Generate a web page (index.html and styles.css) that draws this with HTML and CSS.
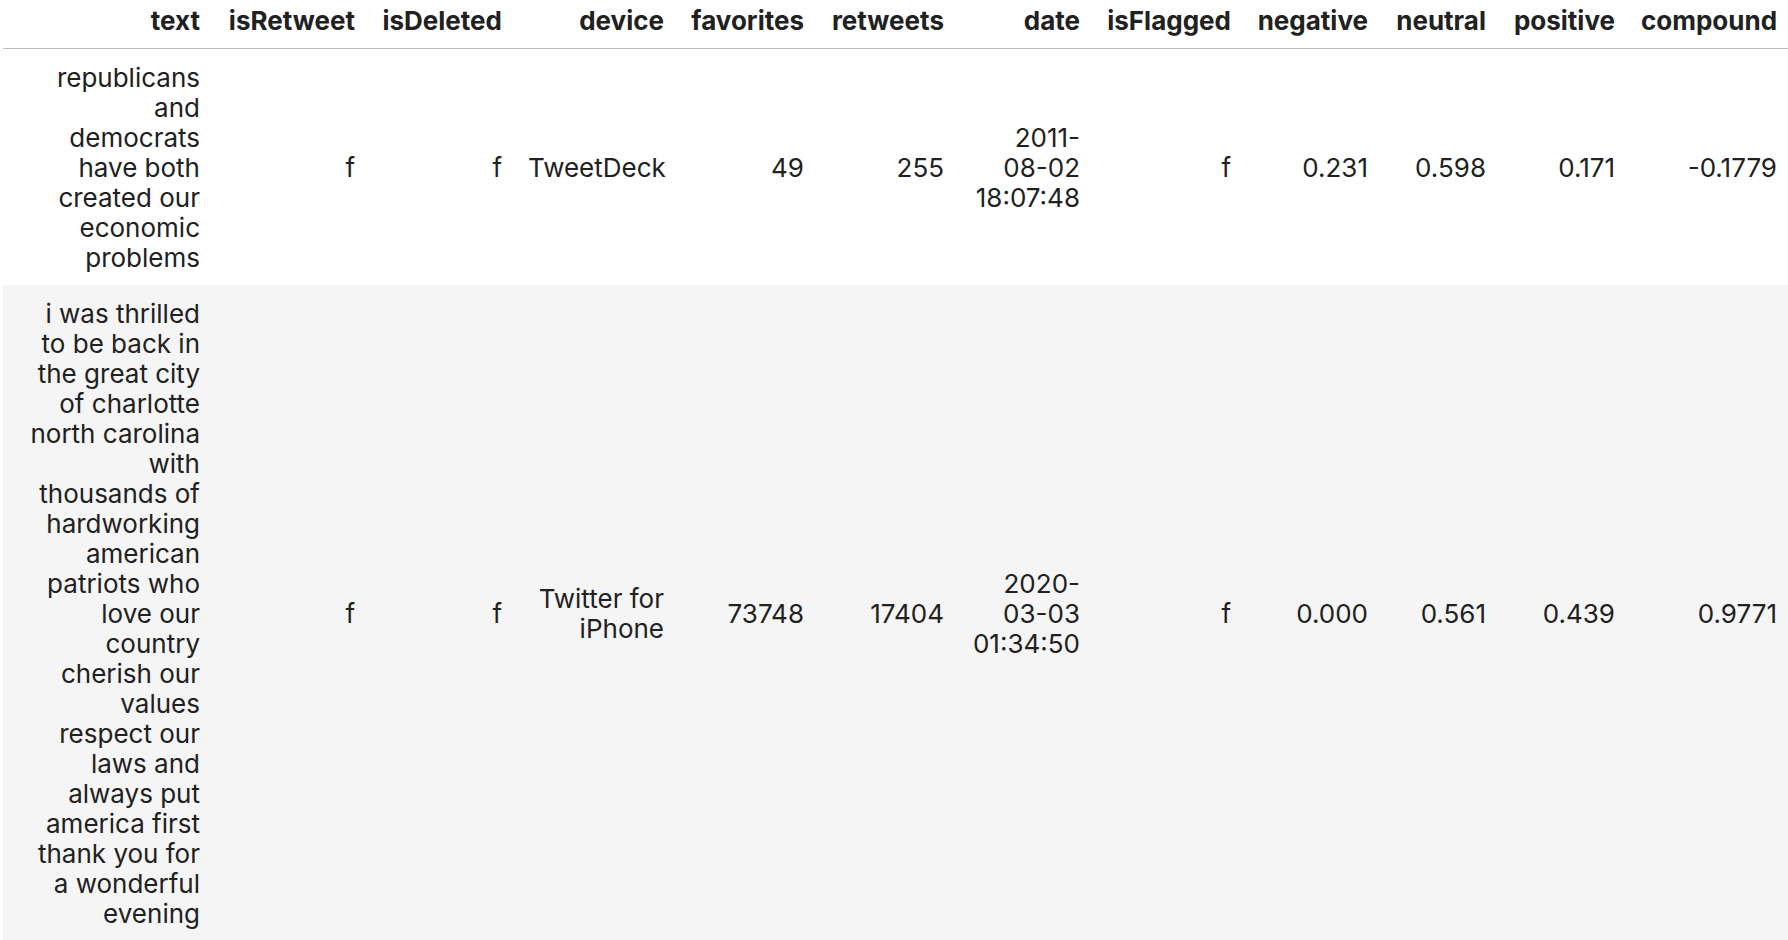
FILE: index.html
```html
<!DOCTYPE html>
<html lang="en">
<head>
<meta charset="utf-8">
<title>DataFrame</title>
<link rel="stylesheet" href="styles.css">
</head>
<body>
<div class="output">
<table class="dataframe">
<colgroup>
<col class="c-text"><col class="c-rt"><col class="c-del"><col class="c-dev"><col class="c-fav"><col class="c-ret"><col class="c-date"><col class="c-flag"><col class="c-neg"><col class="c-neu"><col class="c-pos"><col class="c-comp">
</colgroup>
<thead>
<tr>
<th class="first">text</th><th>isRetweet</th><th>isDeleted</th><th>device</th><th>favorites</th><th>retweets</th><th>date</th><th>isFlagged</th><th>negative</th><th>neutral</th><th>positive</th><th>compound</th>
</tr>
</thead>
<tbody>
<tr>
<td class="first">republicans and democrats have both created our economic problems</td>
<td>f</td><td>f</td><td>TweetDeck</td><td>49</td><td>255</td><td class="date">2011-<wbr><span class="nw">08-02</span> <span class="nw">18:07:48</span></td><td>f</td><td>0.231</td><td>0.598</td><td>0.171</td><td>-0.1779</td>
</tr>
<tr>
<td class="first">i was thrilled to be back in the great city of charlotte north carolina with thousands of hardworking american patriots who love our country cherish our values respect our laws and always put america first thank you for a wonderful evening</td>
<td>f</td><td>f</td><td>Twitter for iPhone</td><td>73748</td><td>17404</td><td class="date">2020-<wbr><span class="nw">03-03</span> <span class="nw">01:34:50</span></td><td>f</td><td>0.000</td><td>0.561</td><td>0.439</td><td>0.9771</td>
</tr>
</tbody>
</table>
</div>
</body>
</html>
```
FILE: styles.css
```css
html, body {
  margin: 0;
  padding: 0;
  overflow: hidden;
  background: #ffffff;
}
.output {
  padding-left: 3px;
}
.dataframe {
  margin-top: -7px;
  border-collapse: collapse;
  border-spacing: 0;
  table-layout: fixed;
  width: 1787px;
  font-family: Inter, "Noto Sans", sans-serif;
  font-size: 26px;
  line-height: 30px;
  color: #212121;
}
.c-text { width: 210px; }
.c-rt { width: 155px; }
.c-del { width: 147px; }
.c-dev { width: 162px; }
.c-fav { width: 140px; }
.c-ret { width: 140px; }
.c-date { width: 136px; }
.c-flag { width: 151px; }
.c-neg { width: 137px; }
.c-neu { width: 118px; }
.c-pos { width: 129px; }
.c-comp { width: 162px; }
.dataframe th,
.dataframe td {
  padding: 14px 13px 12px;
  text-align: right;
  vertical-align: middle;
  white-space: normal;
}
.dataframe th {
  font-weight: 700;
  padding-top: 13px;
  padding-bottom: 12px;
}
.dataframe thead {
  border-bottom: 1px solid #bdbdbd;
}
.dataframe .first {
  padding-left: 26px;
}
.dataframe td.date {
  padding-left: 6px;
}
.dataframe .nw {
  white-space: nowrap;
}
.dataframe tbody tr:nth-child(even) {
  background: #f5f5f5;
}
```
